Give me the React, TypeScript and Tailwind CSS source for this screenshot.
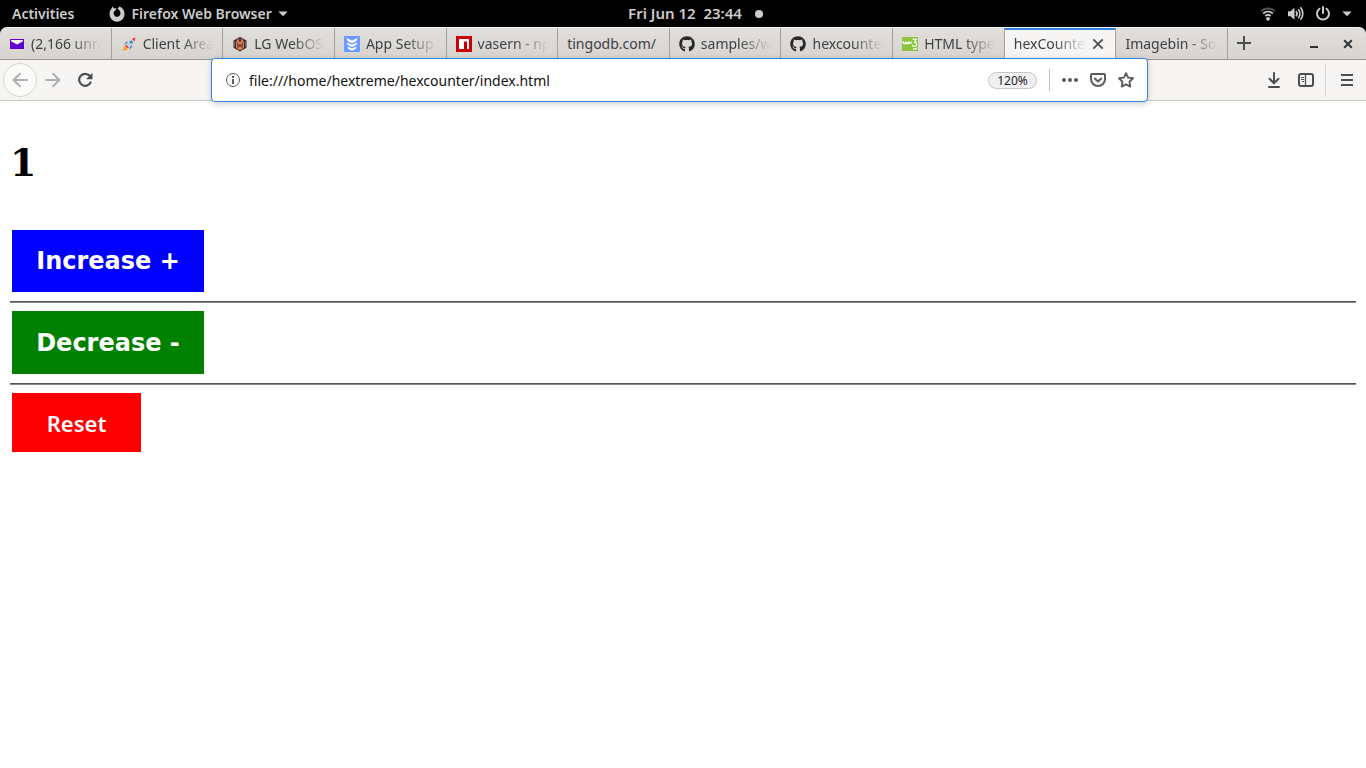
import React, { useState } from 'react';
import { FaGithub } from 'react-icons/fa';

type Tab = { title: string; icon?: React.ReactNode; active?: boolean; fits?: boolean };

const tabs: Tab[] = [
  { title: '(2,166 unre', icon: <MailIcon /> },
  { title: 'Client Area', icon: <RocketIcon /> },
  { title: 'LG WebOS', icon: <HexIcon /> },
  { title: 'App Setup', icon: <ChevronsIcon /> },
  { title: 'vasern - np', icon: <NpmIcon /> },
  { title: 'tingodb.com/', fits: true },
  { title: 'samples/w', icon: <FaGithub size={16} color="#24292e" /> },
  { title: 'hexcounter', icon: <FaGithub size={16} color="#24292e" /> },
  { title: 'HTML type', icon: <W3Icon /> },
  { title: 'hexCounter', active: true },
  { title: 'Imagebin - So' },
];

export default function App() {
  const [count, setCount] = useState(1);

  return (
    <div className="min-h-screen bg-white font-['Noto_Sans',sans-serif] text-black">
      <TopBar />
      <div className="bg-black">
        <TabStrip />
      </div>
      <Toolbar />

      <main className="px-[10px] pt-[39px]">
        <h1 className="pb-[45px] font-['DejaVu_Serif',serif] text-[38px] leading-[45px] font-bold">{count}</h1>
        <CounterButton className="h-[62px] bg-[#0000ff]" onClick={() => setCount(count + 1)}>
          Increase +
        </CounterButton>
        <Rule />
        <CounterButton className="h-[63px] bg-[#008000]" onClick={() => setCount(count - 1)}>
          Decrease -
        </CounterButton>
        <Rule />
        <button
          onClick={() => setCount(0)}
          className="mx-[2px] block h-[59px] min-w-[129px] bg-[#ff0000] px-8 pt-[2px] text-[22px] font-semibold text-white"
        >
          Reset
        </button>
      </main>
    </div>
  );
}

function CounterButton({ className, onClick, children }: { className: string; onClick: () => void; children: React.ReactNode }) {
  return (
    <button
      onClick={onClick}
      className={`mx-[2px] block min-w-[192px] px-5 font-['DejaVu_Sans',sans-serif] text-[24px] font-bold whitespace-nowrap text-white ${className}`}
    >
      {children}
    </button>
  );
}

function Rule() {
  return <hr className="mt-[9px] mb-2 h-[2px] border-t border-b border-t-[#555] border-b-[#888]" />;
}

function TopBar() {
  return (
    <header className="grid h-[27px] grid-cols-[1fr_auto_1fr] items-center bg-black px-3 text-[14px] font-semibold text-[#ccc]">
      <div className="flex items-center">
        <button>Activities</button>
        <button className="ml-[35px] flex items-center gap-[6px]">
          <svg width="16" height="16" viewBox="0 0 16 16">
            <path
              fillRule="evenodd"
              d="M3.400.300 4.500 2.200 7.700 2.400 6.400 4.500 4.900 5.500C4.200 8.600 5.600 10.800 8 10.800c2.300 0 3.600-1.700 3.500-3.700C11.400 5 10 3.600 8.600 3.100L10.200.600C13.600 1.600 15.600 4.600 15.500 8.200a7.500 7.500 0 0 1-15 0C.500 5.500 1.400 3.900 2.400 2.800Z"
              fill="#ccc"
            />
          </svg>
          Firefox Web Browser
          <Caret />
        </button>
      </div>
      <button className="flex items-center pl-[25px] text-[15px] whitespace-pre">
        Fri Jun 12  23:44
        <span className="ml-[13px] h-2 w-2 rounded-full bg-[#ccc]" />
      </button>
      <button aria-label="System" className="flex items-center gap-[11px] justify-self-end pr-[2px]">
        <svg width="16" height="16" viewBox="0 0 16 16" fill="none" stroke="#ccc" strokeWidth="1.8">
          <path d="M1.2 5.2C5 1.6 11 1.6 14.8 5.2" stroke="#555" />
          <path d="M3.2 7.5c2.8-2.6 6.8-2.6 9.6 0M5.3 10c1.6-1.5 3.8-1.5 5.4 0" />
          <circle cx="8" cy="12.800" r="1.900" fill="#ccc" stroke="none" />
        </svg>
        <svg width="17" height="16" viewBox="0 0 17 16" fill="none" stroke="#ccc" strokeWidth="1.7">
          <path d="M1 5.200h2.500L7.500 1.700v12l-4-3.500H1Z" fill="#ccc" stroke="none" />
          <path d="M9 5.200c1.300 1.500 1.300 3.500 0 5M11.200 3.200c2.200 2.600 2.200 6.400 0 9M13.400 1.200c3.200 3.700 3.200 8.900 0 12.600" />
        </svg>
        <svg width="16" height="16" viewBox="0 0 16 16" fill="none" stroke="#ccc" strokeWidth="2" strokeLinecap="round">
          <path d="M8 1V7M4.500 2.700a6 6 0 1 0 7 0" />
        </svg>
        <Caret />
      </button>
    </header>
  );
}

function Caret() {
  return (
    <svg width="10" height="6" viewBox="0 0 10 6">
      <path d="M.3.5h9.400L5 5.200Z" fill="#ccc" />
    </svg>
  );
}

function TabStrip() {
  return (
    <div className="flex h-[33px] rounded-t-[7px] border-t border-b border-t-[#f2f0ee] border-b-[#979594] bg-linear-to-b from-[#e1dedb] to-[#d8d4d0] text-[14px] text-[#3b4144]">
      <nav className="flex min-w-0 flex-1">
        {tabs.map((tab) => (
          <TabItem key={tab.title} {...tab} />
        ))}
      </nav>
      <div className="flex w-[138px] shrink-0 items-center pr-[13px] pl-2">
        <button aria-label="New tab">
          <svg width="16" height="16" viewBox="0 0 16 16" stroke="#4a4f52" strokeWidth="2">
            <path d="M8 0v14M1 7h14" />
          </svg>
        </button>
        <button aria-label="Minimize" className="ml-auto">
          <svg width="10" height="10" viewBox="0 0 10 10">
            <path d="M1 7h8v2H1Z" fill="#2e3436" />
          </svg>
        </button>
        <button aria-label="Close window" className="ml-6">
          <svg width="10" height="10" viewBox="0 0 10 10" stroke="#2e3436" strokeWidth="2">
            <path d="M1.200 1.200 8.800 8.800M8.800 1.200 1.200 8.800" />
          </svg>
        </button>
      </div>
    </div>
  );
}

function TabItem({ title, icon, active, fits }: Tab) {
  return (
    <div
      className={`flex min-w-0 flex-1 basis-0 items-center border-r border-[#a3a09d] px-[9px] ${
        active ? 'bg-[#f6f5f4] shadow-[inset_0_2px_0_#3584e4]' : ''
      }`}
    >
      <button className="flex min-w-0 flex-1 items-center gap-[6px] text-left">
        {icon && <span className="shrink-0">{icon}</span>}
        <span
          className={`min-w-0 flex-1 overflow-hidden whitespace-nowrap ${
            fits ? '' : '[mask-image:linear-gradient(to_left,transparent,black_32px)]'
          }`}
        >
          {title}
        </span>
      </button>
      {active && (
        <button aria-label="Close tab" className="ml-1">
          <svg width="16" height="16" viewBox="0 0 16 16" stroke="#4a4f52" strokeWidth="1.8">
            <path d="m3.300 3.300 9.400 9.400M12.700 3.300l-9.400 9.400" />
          </svg>
        </button>
      )}
    </div>
  );
}

function Toolbar() {
  return (
    <div className="flex h-[41px] items-center border-b border-[#cdc7c2] bg-[#f6f5f4]">
      <div className="flex w-[211px] shrink-0 items-center pl-[3px]">
        <button aria-label="Back" className="flex h-[34px] w-[34px] items-center justify-center rounded-full border border-[#d6d4d2] bg-[#fafaf9]">
          <svg width="16" height="16" viewBox="0 0 16 16" fill="none" stroke="#b0b0af" strokeWidth="2" strokeLinecap="round" strokeLinejoin="round">
            <path d="M15 8H1.500M8 1.800 1.500 8 8 14.200" />
          </svg>
        </button>
        <button aria-label="Forward" className="ml-2">
          <svg width="16" height="16" viewBox="0 0 16 16" fill="none" stroke="#b0b0af" strokeWidth="2" strokeLinecap="round" strokeLinejoin="round">
            <path d="M1 8h13.500M8 1.800 14.500 8 8 14.200" />
          </svg>
        </button>
        <button aria-label="Reload" className="ml-4">
          <svg width="16" height="16" viewBox="0 0 16 16" fill="none" stroke="#4a4f52" strokeWidth="2.200" strokeLinecap="round">
            <path d="M12.800 4A6 6 0 1 0 13.500 10.500" />
            <path d="M15.500.800v6.400H9Z" fill="#4a4f52" stroke="none" />
          </svg>
        </button>
      </div>

      <div className="z-10 flex h-[44px] min-w-0 flex-1 items-center rounded-[4px] border border-[#3584e4] bg-white px-[13px] text-[#5b5b5c] shadow-[0_2px_6px_rgba(0,0,0,0.2)]">
        <svg width="16" height="16" viewBox="0 0 16 16" fill="none" stroke="#5b5b5c">
          <circle cx="8" cy="8" r="6.500" />
          <path d="M7 4h2v2H7ZM7 7h2v5H7Z" fill="#5b5b5c" stroke="none" />
        </svg>
        <input
          aria-label="Address"
          defaultValue="file:///home/hextreme/hexcounter/index.html"
          className="ml-2 min-w-0 flex-1 text-[14px] text-[#111] outline-none"
        />
        <button className="h-[17px] w-[49px] rounded-full border border-[#c6c5c5] bg-[#f0f0f0] text-[12px] leading-[15px] text-[#222]">
          120%
        </button>
        <span className="mx-3 h-[22px] w-px bg-[#c3c3c3]" />
        <div className="flex gap-3">
          <button aria-label="Page actions">
            <svg width="16" height="16" viewBox="0 0 16 16" fill="currentColor">
              <circle cx="2" cy="8" r="2" />
              <circle cx="8" cy="8" r="2" />
              <circle cx="14" cy="8" r="2" />
            </svg>
          </button>
          <button aria-label="Save to Pocket">
            <svg width="16" height="16" viewBox="0 0 16 16" fill="none" stroke="currentColor" strokeWidth="2" strokeLinecap="round" strokeLinejoin="round">
              <path d="M2 2h12a1 1 0 0 1 1 1v4a7 7 0 0 1-14 0V3a1 1 0 0 1 1-1Z" />
              <path d="m4.800 6.500 3.200 3 3.200-3" />
            </svg>
          </button>
          <button aria-label="Bookmark this page">
            <svg width="16" height="16" viewBox="0 0 16 16" fill="none" stroke="currentColor" strokeWidth="1.9" strokeLinejoin="round">
              <path d="m8 1.200 2.100 4.400 4.900.7-3.500 3.400.8 4.900L8 12.300l-4.300 2.300.8-4.900L1 6.300l4.900-.7Z" />
            </svg>
          </button>
        </div>
      </div>

      <div className="flex w-[218px] shrink-0 items-center justify-end pr-[11px] text-[#4a4f52]">
        <button aria-label="Downloads">
          <svg width="16" height="16" viewBox="0 0 16 16" fill="none" stroke="currentColor" strokeWidth="2" strokeLinecap="round" strokeLinejoin="round">
            <path d="M8 1v10M3.500 6.800 8 11.200l4.500-4.400M3 15h10" />
          </svg>
        </button>
        <button aria-label="Sidebars" className="ml-4">
          <svg width="16" height="16" viewBox="0 0 16 16" fill="none" stroke="currentColor">
            <rect x="1" y="2" width="14" height="12" rx="2" strokeWidth="2" />
            <path d="M7.500 2v12" strokeWidth="1.300" />
            <path d="M3 5.500h3M3 7.500h3M4 9.500h2" />
          </svg>
        </button>
        <span className="mr-[13px] ml-[11px] h-[34px] w-px bg-[#dad8d6]" />
        <button aria-label="Menu">
          <svg width="16" height="16" viewBox="0 0 16 16" stroke="currentColor" strokeWidth="2">
            <path d="M2 3h12M2 8h12M2 13h12" />
          </svg>
        </button>
      </div>
    </div>
  );
}

function MailIcon() {
  return (
    <svg width="16" height="16" viewBox="0 0 16 16">
      <path d="M1 3h14v10H1Z" fill="#5f01d1" />
      <path d="M2 4h12v1.200L8 8.500 2 5.200Z" fill="#fff" />
    </svg>
  );
}

function RocketIcon() {
  return (
    <svg width="16" height="16" viewBox="0 0 16 16">
      <path d="M1.500 15 3 9.500l4 4Z" fill="#f9a825" />
      <path d="m2.500 9 3-3.500L8 6ZM8 14l3-3-.5-3Z" fill="#1e88c9" />
      <path d="M5 9C6.500 5.500 9.500 3 12.500 2.500l1.500 1C13.500 7 11 10 7 11.500Z" fill="#c9d3da" />
      <path d="M11 2.700 14.500 1.500 13.600 5.500Z" fill="#e53935" />
      <circle cx="10.200" cy="6.200" r="1.400" fill="#1e88c9" />
      <path d="m5 8.500 3 3-1.500.8-2.200-2.200Z" fill="#e53935" />
    </svg>
  );
}

function HexIcon() {
  return (
    <svg width="16" height="16" viewBox="0 0 16 16">
      <path d="m8 .8 6.500 3.600v7.400L8 15.500l-6.500-3.700V4.400Z" fill="#30343a" />
      <path d="M8 1.500 10.500 3 12 6.500v4.700L9.500 14h-3L4 11.200V6.500L5.500 3Z" fill="#e8734a" />
      <path d="M8 1.500 9.700 4 8 6.200 6.300 4ZM6.500 8.800h3v1.700h-3Z" fill="#30343a" />
      <path d="M5.800 7v5M10.200 7v5" stroke="#5b4038" />
      <path d="M2.500 5.500v5M13.500 5.500v5" stroke="#606770" />
    </svg>
  );
}

function ChevronsIcon() {
  return (
    <svg width="16" height="16" viewBox="0 0 16 16">
      <path d="M0 0h16v16H0Z" fill="#6b9bff" />
      <path d="m2.500 2 5.500 2.500L13.500 2l-1 3L8 7.200 3.500 5ZM3 6.500l5 2.200 5-2.200-.7 2.500L8 11 3.700 9ZM3.500 10.500 8 12.500l4.500-2-1 2.500L8 14.700 4.500 13Z" fill="#fff" />
    </svg>
  );
}

function NpmIcon() {
  return (
    <svg width="16" height="16" viewBox="0 0 16 16">
      <path d="M0 0h16v16H0Z" fill="#cb0000" />
      <path d="M3 3h10v10h-2V5.500H8V13H3Z" fill="#fff" />
    </svg>
  );
}

function W3Icon() {
  return (
    <svg width="16" height="16" viewBox="0 0 16 16" fill="none" stroke="#fff" strokeLinecap="round" strokeLinejoin="round">
      <path d="M0 1h16v14H0Z" fill="#8bc53f" stroke="none" />
      <path d="M1 6c.3 2.200 2.400 2.200 2.800 0 .4 2.200 2.500 2.200 3 0 .4 1.500 1.600 1.500 2.700.3" strokeWidth="1.500" />
      <path d="M11 3.200h3.300L12.500 6.300c3 .2 2.700 4.400-.3 4-1 0-1.500-.5-1.700-1.100M11.500 12.800c1.200.5 2.200.3 3-.5" strokeWidth="1.300" />
    </svg>
  );
}
